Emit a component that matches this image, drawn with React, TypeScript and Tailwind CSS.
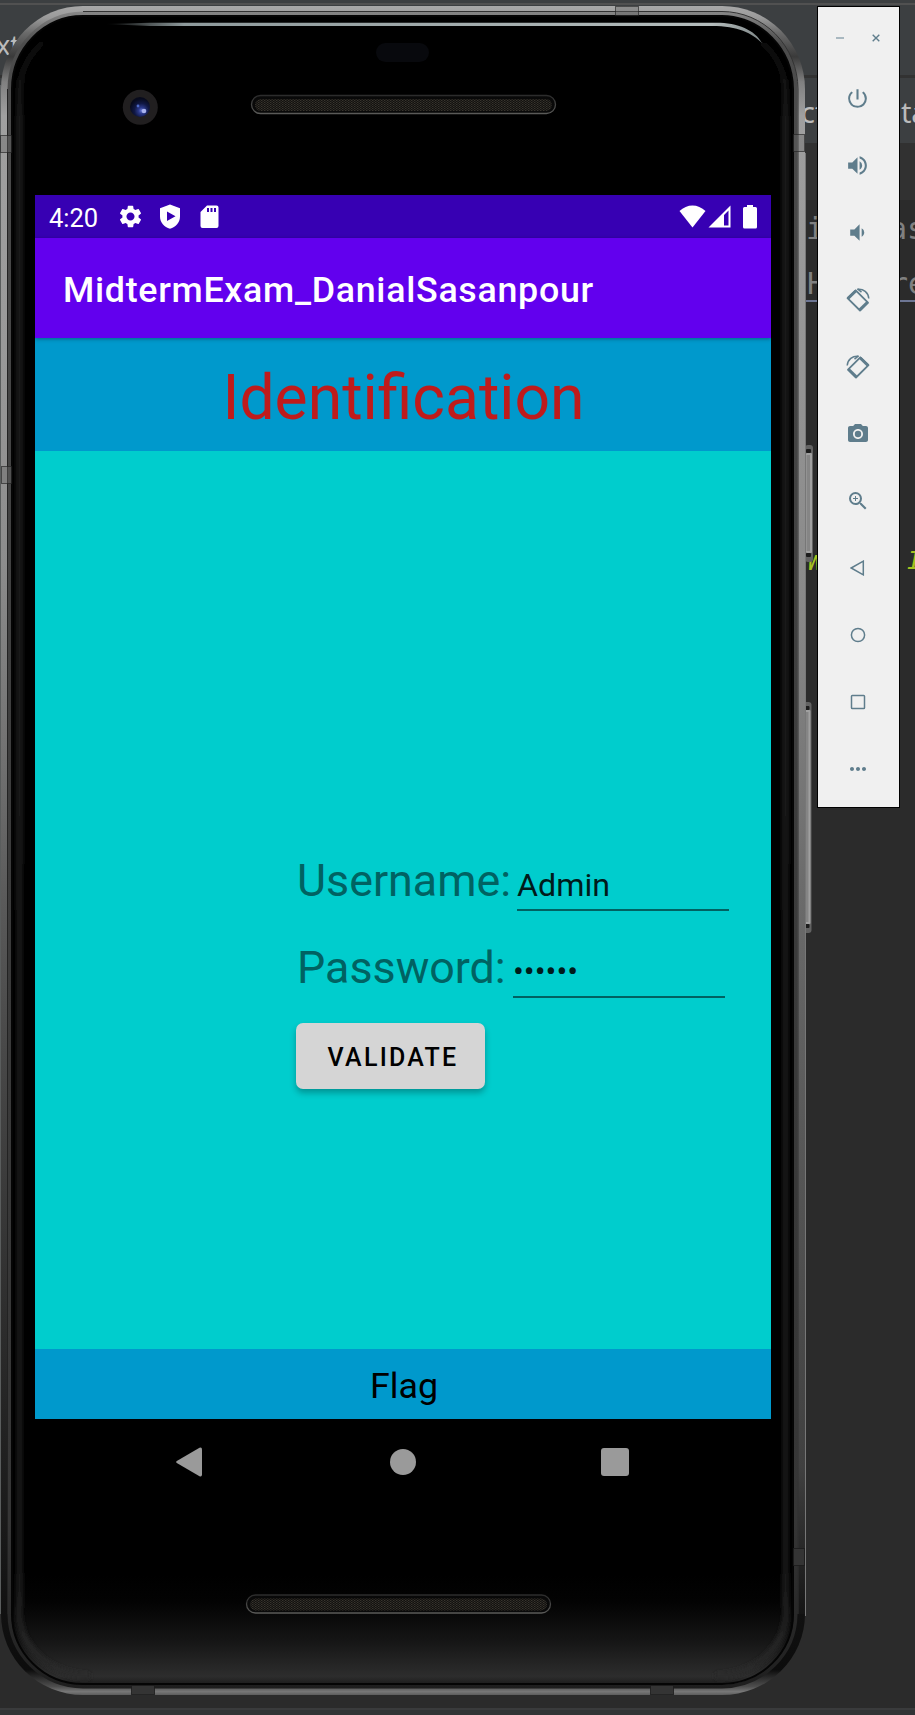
import React from "react";
import {
  MdPowerSettingsNew,
  MdVolumeUp,
  MdVolumeDown,
  MdPhotoCamera,
  MdZoomIn,
  MdMoreHoriz,
  MdSettings,
} from "react-icons/md";

const ROBOTO = "font-['Roboto',sans-serif]";

/* ---------- editor window behind the emulator ---------- */

function EditorBackdrop() {
  return (
    <div className="absolute inset-0 flex flex-col overflow-hidden bg-[#2b2b2b]">
      <div className="h-[3px] shrink-0 bg-[#3c3f41]" />
      <div className="h-[2px] shrink-0 bg-[#515151]" />
      <div className="h-[70px] shrink-0 bg-[#3c3f41]" />
      <div className="h-[3px] shrink-0 bg-[#323232]" />
      <div className="h-[65px] shrink-0 bg-[#3c3f41]" />
      <div className="h-[57px] shrink-0 bg-[#313131]" />
      <div className="grow bg-[#2b2b2b]" />
      <div className="h-[2px] shrink-0 bg-[#3a3b3c]" />
      <div className="h-[5px] shrink-0 bg-[#313335]" />
      <span className="absolute left-[-4px] top-[29px] font-['Noto_Sans',sans-serif] text-[27px] leading-[32px] text-[#bbbbbb]">xt</span>
      <span className="absolute left-[801px] top-[92px] font-['Noto_Sans',sans-serif] text-[29px] leading-[40px] text-[#bbbbbb]">ct</span>
      <span className="absolute left-[887px] top-[92px] whitespace-nowrap font-['Noto_Sans',sans-serif] text-[29px] leading-[40px] text-[#bbbbbb]">sta</span>
      <span className="absolute left-[806px] top-[209px] font-['DejaVu_Sans_Mono',monospace] text-[30px] leading-[40px] text-[#808080]">i</span>
      <span className="absolute left-[889px] top-[209px] whitespace-nowrap font-['DejaVu_Sans_Mono',monospace] text-[30px] leading-[40px] text-[#808080]">as</span>
      <span className="absolute left-[807px] top-[264px] font-['DejaVu_Sans_Mono',monospace] text-[30px] leading-[40px] text-[#808080]">H</span>
      <span className="absolute left-[890px] top-[264px] whitespace-nowrap font-['DejaVu_Sans_Mono',monospace] text-[30px] leading-[40px] text-[#808080]">re</span>
      <div className="absolute left-[806px] top-[300px] h-[2px] w-[109px] bg-[#6d7694]" />
      <span className="absolute left-[808px] top-[541px] font-['DejaVu_Sans_Mono',monospace] text-[26px] italic leading-[40px] text-[#a5c220]">W</span>
      <span className="absolute left-[907px] top-[541px] font-['DejaVu_Sans_Mono',monospace] text-[25px] italic leading-[40px] text-[#a5c220]">I</span>
    </div>
  );
}

/* ---------- phone hardware drawing ---------- */

const OUTER = "M83 6H722A83 83 0 0 1 805 89V1614A83 81 0 0 1 722 1695H83A82 81 0 0 1 1 1614V89A82 83 0 0 1 83 6Z";
const INNER = "M83 16H722A72 74 0 0 1 793 89V1614A72 70 0 0 1 722 1684H83A71 70 0 0 1 12 1614V89A71 73 0 0 1 83 16Z";

function Speaker({ x, y }: { x: number; y: number }) {
  return (
    <g>
      <rect x={x + 0.5} y={y + 0.5} width="304" height="18" rx="9" fill="#090909" stroke="url(#spk)" strokeWidth="1.3" />
      <rect x={x + 4} y={y + 4} width="297" height="12" rx="6" fill="url(#mesh)" />
    </g>
  );
}

function SideButton({ x, y, h }: { x: number; y: number; h: number }) {
  return (
    <g>
      <rect x={x} y={y} width="8" height={h} rx="3" fill="#626262" />
      <rect x={x + 1} y={y + 8} width="6" height={h - 17} rx="1" fill="#a0a0a0" />
      <rect x={x + 1.5} y={y + 10} width="3.500" height={h - 21} fill="#858585" />
      <rect x={x + 1} y={y + 4} width="5" height="4" rx="1" fill="#1c1c1c" />
      <rect x={x + 1} y={y + h - 9} width="5" height="4" rx="1" fill="#1c1c1c" />
    </g>
  );
}

function DeviceShell() {
  return (
    <svg className="absolute inset-0" width="915" height="1715" viewBox="0 0 915 1715" fill="none">
      <defs>
        <linearGradient id="metal" x1="0" y1="6" x2="0" y2="1695" gradientUnits="userSpaceOnUse">
          <stop offset="0" stopColor="#a8a8a8" />
          <stop offset="0.007" stopColor="#9a9a9a" />
          <stop offset="0.016" stopColor="#6a6a6a" />
          <stop offset="0.03" stopColor="#3a3a3a" />
          <stop offset="0.045" stopColor="#808080" />
          <stop offset="0.065" stopColor="#a0a0a0" />
          <stop offset="0.2" stopColor="#999" />
          <stop offset="0.33" stopColor="#8c8c8c" />
          <stop offset="0.45" stopColor="#707070" />
          <stop offset="0.53" stopColor="#5a5a5a" />
          <stop offset="0.62" stopColor="#484848" />
          <stop offset="0.82" stopColor="#262626" />
          <stop offset="0.94" stopColor="#131313" />
          <stop offset="0.985" stopColor="#0c0c0c" />
          <stop offset="0.995" stopColor="#4e4e4e" />
          <stop offset="0.998" stopColor="#777" />
          <stop offset="1" stopColor="#5c5c5c" />
        </linearGradient>
        <linearGradient id="metalR" x1="0" y1="150" x2="0" y2="1614" gradientUnits="userSpaceOnUse">
          <stop offset="0" stopColor="#9e9e9e" />
          <stop offset="0.3" stopColor="#8a8a8a" />
          <stop offset="0.5" stopColor="#6c6c6c" />
          <stop offset="0.7" stopColor="#555" />
          <stop offset="0.9" stopColor="#404040" />
          <stop offset="1" stopColor="#151515" />
        </linearGradient>
        <linearGradient id="ring" x1="0" y1="10" x2="0" y2="1690" gradientUnits="userSpaceOnUse">
          <stop offset="0" stopColor="#8a8a8a" />
          <stop offset="0.02" stopColor="#4c4c4c" />
          <stop offset="0.5" stopColor="#3c3c3c" />
          <stop offset="0.9" stopColor="#363636" />
          <stop offset="1" stopColor="#1e1e1e" />
        </linearGradient>
        <linearGradient id="glow" x1="0" y1="20" x2="0" y2="1684" gradientUnits="userSpaceOnUse">
          <stop offset="0" stopColor="#000" />
          <stop offset="0.06" stopColor="#1e1e1e" />
          <stop offset="0.93" stopColor="#1c1c1c" />
          <stop offset="1" stopColor="#2b2b2b" />
        </linearGradient>
        <filter id="soft" x="-5%" y="-5%" width="110%" height="110%">
          <feGaussianBlur stdDeviation="2" />
        </filter>
        <linearGradient id="chin" x1="0" y1="1575" x2="0" y2="1684" gradientUnits="userSpaceOnUse">
          <stop offset="0" stopColor="#000" />
          <stop offset="0.25" stopColor="#030303" />
          <stop offset="0.6" stopColor="#151515" />
          <stop offset="0.93" stopColor="#2d2d2d" />
          <stop offset="1" stopColor="#1d1d1d" />
        </linearGradient>
        <linearGradient id="shine" x1="105" y1="0" x2="765" y2="0" gradientUnits="userSpaceOnUse">
          <stop offset="0" stopColor="#8e9a9c" stopOpacity="0" />
          <stop offset="0.12" stopColor="#8e9a9c" />
          <stop offset="0.92" stopColor="#b4bcbc" />
          <stop offset="1" stopColor="#7d8586" />
        </linearGradient>
        <linearGradient id="spk" x1="0" y1="0" x2="0" y2="1">
          <stop offset="0" stopColor="#2c2c2c" />
          <stop offset="1" stopColor="#5a5a58" />
        </linearGradient>
        <radialGradient id="lens" cx="0.58" cy="0.68" r="0.6">
          <stop offset="0" stopColor="#6d7fd8" />
          <stop offset="0.25" stopColor="#2c3a8c" />
          <stop offset="0.6" stopColor="#101844" />
          <stop offset="1" stopColor="#070a1c" />
        </radialGradient>
        <pattern id="mesh" width="3" height="2" patternUnits="userSpaceOnUse">
          <rect width="3" height="2" fill="#12110f" />
          <rect width="1.4" height="1" fill="#38342d" />
          <rect x="1.5" y="1" width="1.4" height="1" fill="#2c2924" />
        </pattern>
        <clipPath id="innerClip">
          <path d={INNER} />
        </clipPath>
      </defs>
      <path d="M0.5 85V1614" stroke="#6f7373" strokeOpacity="0.7" />
      <SideButton x={805} y={445} h={117} />
      <SideButton x={803.5} y={702} h={231} />
      <path d={OUTER} fill="url(#metal)" />
      <rect x="793" y="150" width="12" height="1464" fill="url(#metalR)" />
      <path d="M805.5 153V1616" stroke="#777" />
      <path d="M83 13.5H722A74 76 0 0 1 795.500 89V1614A74 73 0 0 1 722 1686.500H83A74 73 0 0 1 9.5 1614V89A74 76 0 0 1 83 13.5Z" stroke="url(#ring)" strokeWidth="4" />
      <path d="M83 11.500H722A76 78 0 0 1 798 89V1614" stroke="#333" strokeWidth="1" />
      <path d="M7.500 89V1614" stroke="#222" strokeWidth="1" />
      <path d={INNER} fill="#000" />
      <g clipPath="url(#innerClip)">
        <rect x="12" y="1575" width="782" height="110" fill="url(#chin)" />
        <path d="M90 1676A71 64 0 0 1 19.500 1604V95A66 66 0 0 1 60 32M745 32A66 66 0 0 1 785.500 95V1604A71 64 0 0 1 715 1676" stroke="url(#glow)" strokeWidth="6" filter="url(#soft)" />
      </g>
      <path d={INNER} stroke="#050505" strokeWidth="2" />
      <g stroke="#222" strokeOpacity="0.65" fill="#666" fillOpacity="0.4">
        <rect x="615.5" y="6.5" width="23" height="9" />
        <rect x="0.5" y="135.5" width="11" height="17" />
        <rect x="793.5" y="134.5" width="11" height="17" />
        <rect x="1.5" y="466.5" width="10" height="17" />
      </g>
      <g stroke="#1a1a1a" strokeOpacity="0.8" fill="#343434">
        <rect x="131.5" y="1685.5" width="23" height="9" />
        <rect x="650.5" y="1685.5" width="23" height="9" />
        <rect x="793.5" y="1548.5" width="11" height="17" />
      </g>
      <path d="M105 24L150 22.7H716C738 22.7 755 30 762 43C752 33 738 26 712 26H150Z" fill="url(#shine)" />
      <rect x="376" y="43" width="53" height="19" rx="9.5" fill="#08090d" />
      <circle cx="140.3" cy="107.3" r="17.5" fill="#211f20" />
      <circle cx="140" cy="107" r="10" fill="url(#lens)" />
      <circle cx="138" cy="106" r="1.4" fill="#4f6ac8" />
      <circle cx="144" cy="111" r="2.3" fill="#a9b3ee" />
      <Speaker x={251} y={95} />
      <Speaker x={246} y={1594.5} />
    </svg>
  );
}

/* ---------- Android screen ---------- */

function StatusBar() {
  return (
    <div className={`flex h-[43px] shrink-0 items-center bg-[#3700b3] pl-[14px] pr-[14px] text-white ${ROBOTO}`}>
      <span className="w-[68px] pt-[2px] text-[25.5px] leading-[30px]">4:20</span>
      <MdSettings className="mr-[14px] size-[27px]" />
      <svg className="mr-[18px] h-[25px] w-[24px]" viewBox="0 0 24 25" fill="currentColor">
        <path fillRule="evenodd" d="M12 .5L22 4.3V12.5C22 18.500 17.800 23.200 12 24.800C6.200 23.200 2 18.500 2 12.500V4.300ZM9 7.500V17L17.500 12.200Z" />
      </svg>
      <svg className="h-[24px] w-[19px]" viewBox="0 0 19 24" fill="currentColor">
        <path fillRule="evenodd" d="M7 .5H16.500A2 2 0 0 1 18.500 2.500V21A2 2 0 0 1 16.500 23H2.500A2 2 0 0 1 .5 21V7ZM7 3V7H9V3ZM10.500 3V7H12.500V3ZM14 3V7H16V3Z" />
      </svg>
      <div className="grow" />
      <svg className="mr-[2px] h-[23px] w-[27px]" viewBox="0 0 27 23" fill="currentColor">
        <path d="M.5 6C8-1.500 19-1.500 26.500 6L13.500 22.500Z" />
      </svg>
      <svg className="mr-[12px] h-[23px] w-[23px]" viewBox="0 0 23 23" fill="currentColor">
        <path fillRule="evenodd" d="M22.500 .5V22.500H.5ZM20.500 5.500L16 10V20.500H20.500Z" />
      </svg>
      <svg className="h-[24px] w-[14px]" viewBox="0 0 14 24" fill="currentColor">
        <path d="M4 0H10V2H12.500A1.500 1.500 0 0 1 14 3.500V22A1.500 1.500 0 0 1 12.500 23.500H1.500A1.500 1.500 0 0 1 0 22V3.500A1.500 1.500 0 0 1 1.500 2H4Z" />
      </svg>
    </div>
  );
}

function Screen() {
  return (
    <div className={`flex h-[1224px] w-[736px] flex-col bg-[#00cdcd] ${ROBOTO}`}>
      <StatusBar />
      <div className="z-10 flex h-[100px] shrink-0 items-center bg-[#6200ee] pl-[28px] pt-[3px] text-[35.8px] font-medium leading-[42px] tracking-[0.7px] text-white shadow-[0_1px_4px_rgba(0,0,0,0.35)]">
        MidtermExam_DanialSasanpour
      </div>
      <div className="flex h-[113px] shrink-0 items-center justify-center bg-[#0099cc] pl-[1px] pt-[7px] text-[62.4px] leading-[72px] text-[#bf1b1b]">
        Identification
      </div>
      <form className="flex grow flex-col items-start pl-[261px] pt-[400px]">
        <div className="flex h-[87px]">
          <label className="w-[221px] pl-px text-[44.8px] leading-[60px] text-[#006262]">Username:</label>
          <div className="h-[60px] w-[212px] border-b-2 border-[#006262] pt-[15px] text-[32.2px] leading-[39px] text-[#001b1b]">Admin</div>
        </div>
        <div className="flex h-[85px]">
          <label className="w-[217px] pl-px text-[44.8px] leading-[60px] text-[#006262]">Password:</label>
          <div className="h-[60px] w-[212px] border-b-2 border-[#006262] pt-[14px] text-[32.2px] leading-[39px] text-[#001b1b]">••••••</div>
        </div>
        <button
          type="button"
          className="flex h-[66px] w-[189px] items-center justify-center rounded-[7px] bg-[#d5d5d5] pl-[5px] pt-[3px] text-[25px] font-medium tracking-[2.24px] text-black shadow-[0_4px_6px_rgba(0,0,0,0.28)]"
        >
          VALIDATE
        </button>
      </form>
      <div className="flex h-[70px] shrink-0 items-center justify-center bg-[#0099cc] pl-[2px] pt-[3px] text-[35.8px] leading-[42px] text-black">
        Flag
      </div>
    </div>
  );
}

function NavBar() {
  return (
    <div className="flex h-[86px] w-[736px] items-center pl-[141px] text-[#9a9a9a]">
      <svg className="mr-[187px] h-[30px] w-[27px]" viewBox="0 0 27 30" fill="currentColor">
        <path d="M.8 14L23.500 .8Q26 0 26 2.500V27.500Q26 30 23.500 29.200L.8 16Q-.5 15 .8 14Z" />
      </svg>
      <div className="mr-[185px] size-[26px] rounded-full bg-current" />
      <div className="size-[28px] rounded-[3px] bg-current" />
    </div>
  );
}

/* ---------- emulator tool strip ---------- */

function RotateIcon({ flip = false }: { flip?: boolean }) {
  return (
    <svg className={`h-[24px] w-[24px] ${flip ? "-scale-x-100" : ""}`} viewBox="0 0 24 24" fill="none" stroke="currentColor">
      <path d="M1.500 10.200L9.700 2.300L22 14.700L14 22.500Z" strokeWidth="1.800" strokeLinejoin="round" />
      <path d="M2 10.500L9.700 3" strokeWidth="3" />
      <path d="M13.500 22L21.500 14.200" strokeWidth="3" />
      <path d="M11.500 1.300C17.500 .6 22.300 4.500 22.800 10.500" strokeWidth="1.500" />
      <path d="M11.500 .9L15.500 4.200" strokeWidth="1.500" />
    </svg>
  );
}

function ToolStrip() {
  const icons = [
    <MdPowerSettingsNew className="size-[25px]" />,
    <MdVolumeUp className="size-[25px]" />,
    <MdVolumeDown className="size-[25px]" />,
    <RotateIcon />,
    <RotateIcon flip />,
    <MdPhotoCamera className="size-[24px]" />,
    <MdZoomIn className="size-[24px]" />,
    <svg className="h-[16px] w-[15px]" viewBox="0 0 15 16" fill="none" stroke="currentColor" strokeWidth="1.500">
      <path d="M1.200 8L13.300 1.200V14.800Z" />
    </svg>,
    <svg className="size-[16px]" viewBox="0 0 16 16" fill="none" stroke="currentColor" strokeWidth="1.500">
      <circle cx="8" cy="8" r="6.600" />
    </svg>,
    <svg className="size-[16px]" viewBox="0 0 16 16" fill="none" stroke="currentColor" strokeWidth="1.500">
      <rect x="1.500" y="1.500" width="13" height="13" rx="0.800" />
    </svg>,
    <MdMoreHoriz className="size-[24px]" />,
  ];
  return (
    <div className="flex h-[802px] w-[83px] flex-col border border-black bg-[#f0f0f0] text-[#5f7d8c]">
      <div className="flex h-[58px] shrink-0 items-center pl-[18px] pt-[4px]">
        <div className="h-[2px] w-[8px] bg-[#a9b8c0]" />
        <svg className="ml-[28px] size-[8px]" viewBox="0 0 8 8" stroke="currentColor" strokeWidth="1.400">
          <path d="M.7 .7L7.300 7.300M7.300 .7L.7 7.300" />
        </svg>
      </div>
      {icons.map((icon, i) => (
        <div key={i} className="flex h-[67.1px] shrink-0 items-center justify-center pr-[2px]">
          {icon}
        </div>
      ))}
    </div>
  );
}

export default function App() {
  return (
    <div className="relative flex h-[1715px] w-[915px] items-start overflow-hidden">
      <EditorBackdrop />
      <DeviceShell />
      <div className="relative flex w-[817px] flex-col pl-[35px] pt-[195px]">
        <Screen />
        <NavBar />
      </div>
      <div className="relative pt-[6px]">
        <ToolStrip />
      </div>
    </div>
  );
}
